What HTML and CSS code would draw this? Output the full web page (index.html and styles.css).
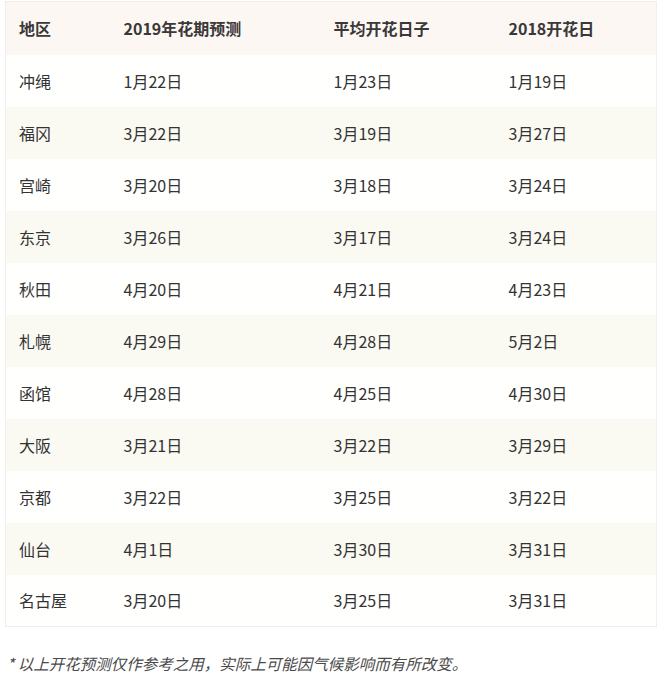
FILE: index.html
```html
<!DOCTYPE html>
<html lang="zh">
<head>
<meta charset="utf-8">
<link rel="stylesheet" href="styles.css">
</head>
<body>
<div class="page">
  <table class="bloom">
    <thead>
      <tr><th>地区</th><th>2019年花期预测</th><th>平均开花日子</th><th>2018开花日</th></tr>
    </thead>
    <tbody>
      <tr><td>冲绳</td><td>1月22日</td><td>1月23日</td><td>1月19日</td></tr>
      <tr><td>福冈</td><td>3月22日</td><td>3月19日</td><td>3月27日</td></tr>
      <tr><td>宫崎</td><td>3月20日</td><td>3月18日</td><td>3月24日</td></tr>
      <tr><td>东京</td><td>3月26日</td><td>3月17日</td><td>3月24日</td></tr>
      <tr><td>秋田</td><td>4月20日</td><td>4月21日</td><td>4月23日</td></tr>
      <tr><td>札幌</td><td>4月29日</td><td>4月28日</td><td>5月2日</td></tr>
      <tr><td>函馆</td><td>4月28日</td><td>4月25日</td><td>4月30日</td></tr>
      <tr><td>大阪</td><td>3月21日</td><td>3月22日</td><td>3月29日</td></tr>
      <tr><td>京都</td><td>3月22日</td><td>3月25日</td><td>3月22日</td></tr>
      <tr><td>仙台</td><td>4月1日</td><td>3月30日</td><td>3月31日</td></tr>
      <tr><td>名古屋</td><td>3月20日</td><td>3月25日</td><td>3月31日</td></tr>
    </tbody>
  </table>
  <p class="note">* 以上开花预测仅作参考之用，实际上可能因气候影响而有所改变。</p>
</div>
</body>
</html>
```

FILE: styles.css
```css
html, body {
  margin: 0;
  padding: 0;
  background: #ffffff;
}
.page {
  padding: 1px 9px 0 5px;
  font-family: "Noto Sans CJK SC", "Noto Sans", sans-serif;
  color: #333333;
}
.bloom {
  width: 652px;
  border-collapse: collapse;
  border: 1px solid #efefec;
  font-size: 16px;
  table-layout: fixed;
}
.bloom th,
.bloom td {
  height: 52px;
  padding: 0 0 0 13px;
  text-align: left;
  vertical-align: middle;
  line-height: 20px;
  box-sizing: border-box;
}
.bloom th { height: 53px; }
.bloom th:nth-child(1), .bloom td:nth-child(1) { width: 105px; }
.bloom th:nth-child(2), .bloom td:nth-child(2) { width: 210px; }
.bloom th:nth-child(3), .bloom td:nth-child(3) { width: 175px; }
.bloom th {
  font-weight: 700;
  color: #3a3838;
  background: #fcf7f3;
}
.bloom tbody tr:nth-child(odd) { background: #fffffe; }
.bloom tbody tr:nth-child(even) { background: #fafaf3; }
.note {
  margin: 26px 0 0 0;
  padding-left: 2px;
  font-size: 15.5px;
  font-style: italic;
  color: #4a4a4a;
  line-height: 20px;
}
```
